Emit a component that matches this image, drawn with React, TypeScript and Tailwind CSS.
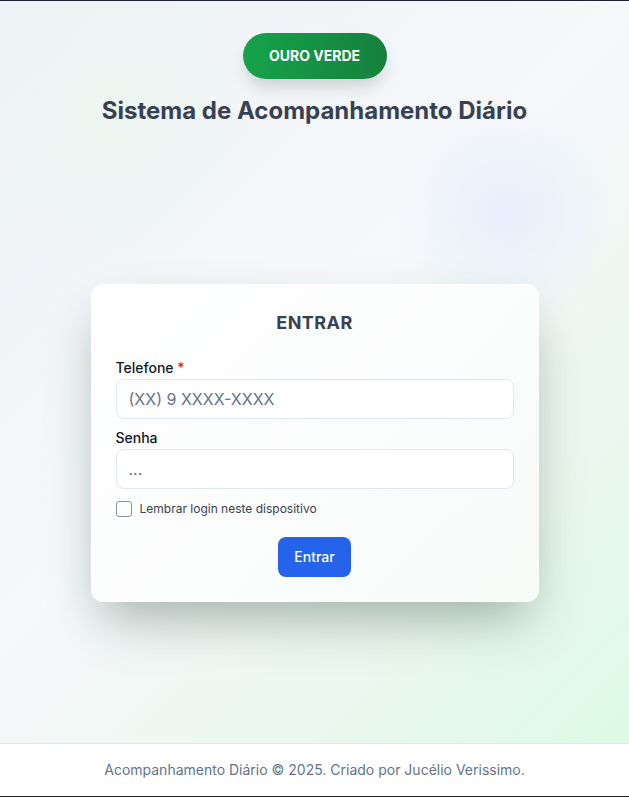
import React from "react";

export default function App() {
  return (
    <div
      className="relative flex h-screen flex-col overflow-hidden border-y border-[#1e2230] bg-[linear-gradient(135deg,#eef2f6_0%,#f6f8fa_45%,#eaf7ee_75%,#dafbe4_100%)]"
      style={{ fontFamily: "Inter, 'Noto Sans', sans-serif" }}
    >
      <div className="pointer-events-none absolute left-[-40px] top-[-40px] h-[300px] w-[300px] rounded-full bg-[radial-gradient(circle,rgba(236,246,240,0.9)_0%,rgba(236,246,240,0)_70%)]" />
      <div className="pointer-events-none absolute left-[395px] top-[100px] h-[220px] w-[220px] rounded-full bg-[radial-gradient(circle,rgba(231,237,252,0.95)_0%,rgba(231,237,252,0)_70%)]" />

      <main className="relative flex flex-1 flex-col">
        <header className="flex flex-col items-center pb-4 pt-8">
          <div className="flex h-[46px] w-[144px] items-center justify-center rounded-full bg-[linear-gradient(90deg,#16a34a,#15803d)] text-sm font-bold text-white shadow-[0_10px_18px_-4px_rgba(0,0,0,0.18)]">
            OURO VERDE
          </div>
          <h1 className="mt-4 text-2xl font-bold leading-8 text-[#374151]">
            Sistema de Acompanhamento Diário
          </h1>
        </header>

        <div className="flex flex-1 items-center justify-center">
          <div className="w-[448px] rounded-xl border border-white bg-[linear-gradient(135deg,#ffffff,#fbfcfc_60%,#f7fbf8)] p-6 shadow-[0_25px_50px_-12px_rgba(30,60,45,0.4)]">
            <h2 className="text-center text-lg font-bold leading-7 tracking-wide text-[#374151]">
              ENTRAR
            </h2>
            <div className="mt-[21px]">
              <label className="block text-sm font-medium leading-5 text-[#111827]">
                Telefone <span className="text-[#dc2626]">*</span>
              </label>
              <input
                className="mt-px h-10 w-full rounded-lg border border-[#e2e8f0] bg-white px-3 text-base text-[#111827] outline-none placeholder:text-[#64748b]"
                placeholder="(XX) 9 XXXX-XXXX"
              />
            </div>
            <div className="mt-[9px]">
              <label className="block text-sm font-medium leading-5 text-[#111827]">
                Senha
              </label>
              <input
                className="mt-px h-10 w-full rounded-lg border border-[#e2e8f0] bg-white px-3 text-base text-[#111827] outline-none placeholder:text-[#64748b]"
                placeholder="..."
              />
            </div>
            <label className="mt-3 flex items-center gap-2">
              <span className="h-4 w-4 rounded-[3px] border border-[#8b929c] bg-white" />
              <span className="text-xs text-[#374151]">
                Lembrar login neste dispositivo
              </span>
            </label>
            <div className="mt-5 flex justify-center">
              <button className="h-10 rounded-lg bg-[#2563eb] px-4 text-sm font-medium text-white">
                Entrar
              </button>
            </div>
          </div>
        </div>
      </main>

      <footer className="relative border-t border-[#e5e7eb] bg-white py-4 text-center text-sm leading-5 text-[#64748b]">
        Acompanhamento Diário © 2025. Criado por Jucélio Verissimo.
      </footer>
    </div>
  );
}
